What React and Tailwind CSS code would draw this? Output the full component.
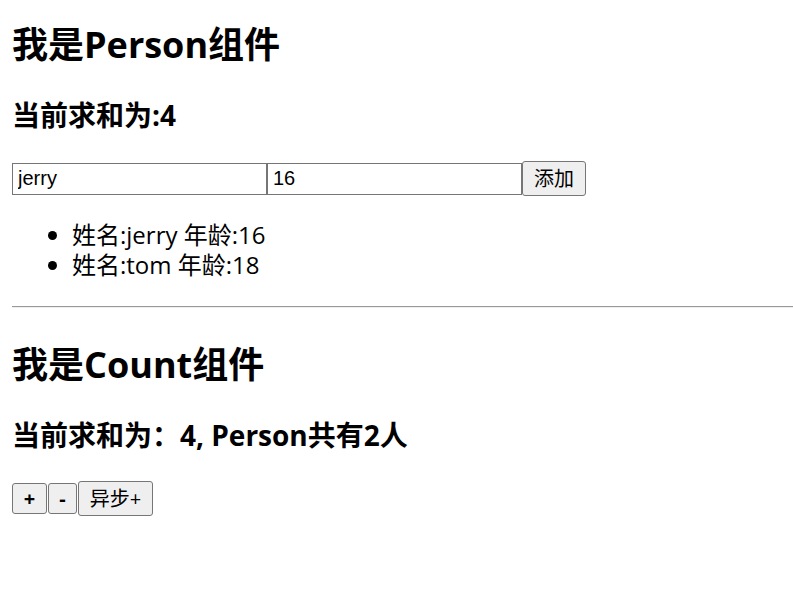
import React from "react";

const cjk = "font-['Open_Sans','Noto_Sans_CJK_SC',sans-serif]";

function Btn({ children, className = "" }) {
  return (
    <button
      className={`${cjk} text-[20px] leading-none text-black bg-[#efefef] border border-[#767676] rounded-[3px] flex items-center justify-center ${className}`}
    >
      {children}
    </button>
  );
}

export default function App() {
  return (
    <div className={`${cjk} text-black bg-white w-[793px] h-[606px] overflow-hidden`}>
      <div className="pl-[12px]">
        <h2 className="text-[36px] leading-[48px] font-bold mt-[21px]">我是Person组件</h2>
        <h3 className="text-[28px] leading-[36px] font-bold mt-[28px]">当前求和为:4</h3>
        <div className="flex items-center mt-[28px] h-[35px]">
          <input
            readOnly
            value="jerry"
            className="w-[255px] h-[32px] border border-[#767676] px-[5px] font-['Liberation_Sans',Arial,sans-serif] text-[20px] text-black outline-none"
          />
          <input
            readOnly
            value="16"
            className="w-[255px] h-[32px] border border-[#767676] px-[5px] font-['Liberation_Sans',Arial,sans-serif] text-[20px] text-black outline-none"
          />
          <Btn className="w-[64px] h-[35px]">添加</Btn>
        </div>
        <ul className="list-disc pl-[60px] mt-[24px] text-[24px] leading-[30px]">
          <li>姓名:jerry 年龄:16</li>
          <li>姓名:tom 年龄:18</li>
        </ul>
      </div>
      <hr className="ml-[12px] mt-[26px] border-0 border-t border-b border-t-[#9a9a9a] border-b-[#eeeeee]" />
      <div className="pl-[12px]">
        <h2 className="text-[36px] leading-[48px] font-bold mt-[33px]">我是Count组件</h2>
        <h3 className="text-[28px] leading-[36px] font-bold mt-[28px]">当前求和为：4, Person共有2人</h3>
        <div className="flex items-center mt-[28px] h-[35px] gap-[1px]">
          <Btn className="w-[35px] h-[31px] font-bold">+</Btn>
          <Btn className="w-[29px] h-[31px] font-bold">-</Btn>
          <Btn className="w-[75px] h-[35px]">异步+</Btn>
        </div>
      </div>
    </div>
  );
}
